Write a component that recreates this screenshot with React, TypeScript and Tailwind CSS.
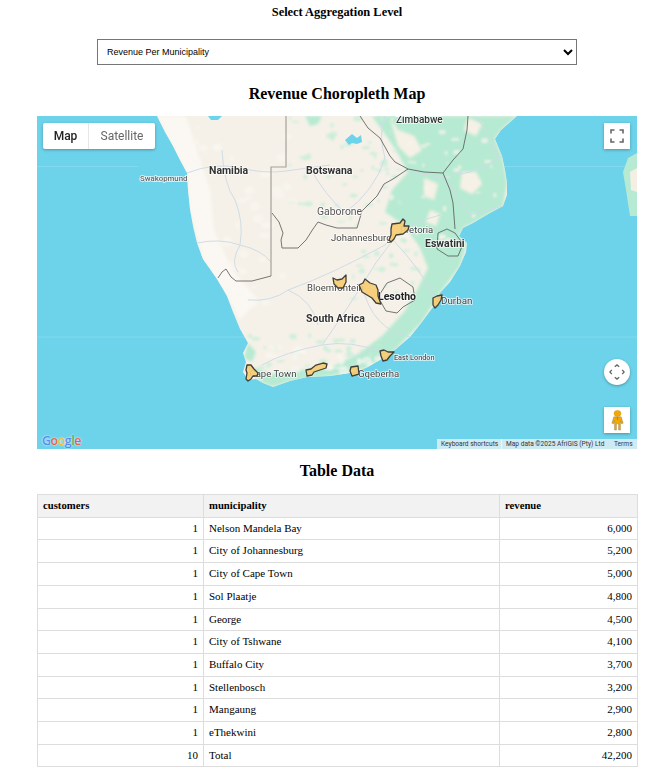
import React from "react";

const ROWS = [
  ["1", "Nelson Mandela Bay", "6,000"],
  ["1", "City of Johannesburg", "5,200"],
  ["1", "City of Cape Town", "5,000"],
  ["1", "Sol Plaatje", "4,800"],
  ["1", "George", "4,500"],
  ["1", "City of Tshwane", "4,100"],
  ["1", "Buffalo City", "3,700"],
  ["1", "Stellenbosch", "3,200"],
  ["1", "Mangaung", "2,900"],
  ["1", "eThekwini", "2,800"],
  ["10", "Total", "42,200"],
];

const LAND =
  "157,116 165,132 173,146 180,160 187,173 188,190 190,209 193,226 197,243 203,259 217,279 227,296 233,312 240,329 248,343 243,353 246,362 243,372 248,380 256,379 263,383 273,387 290,381 307,377 330,376 350,373 366,368 380,360 396,349 410,337 422,322 433,307 440,293 450,282 460,266 466,252 467,243 459,236 463,228 473,223 490,213 503,206 507,195 507,183 505,170 502,156 495,139 501,130 517,116";

const GREEN = [
  "372,116 517,116 501,130 495,139 502,156 507,183 503,206 473,223 463,228 459,236 467,243 460,266 440,293 422,322 396,349 366,368 330,376 290,381 273,387 263,383 252,374 256,368 272,374 300,370 330,368 358,354 382,336 404,312 418,288 428,268 420,248 405,226 385,212 392,190 408,172 396,150 382,130",
  "305,116 322,116 318,124 310,126",
  "248,343 256,352 252,362 244,358",
];

const CREAM = [
  "390,118 398,130 414,136 422,150 410,158 398,146",
  "462,172 476,172 482,184 472,194 460,188",
  "424,178 438,184 434,200 424,196",
  "468,118 482,124 476,136 464,130",
  "430,210 440,214 436,226 426,222",
];

const ROADS = [
  "M187 173 Q215 162 240 168 T286 171 T330 165",
  "M222 150 Q224 185 235 200 Q244 222 240 245 Q230 262 238 272",
  "M197 243 Q220 238 240 245 Q262 250 271 262",
  "M310 168 Q325 195 345 213 Q375 190 385 158 Q378 135 385 116",
  "M288 290 Q330 275 385 245 Q400 225 440 215",
  "M393 240 Q375 262 362 285 Q340 320 322 345 Q285 352 262 365",
  "M362 285 Q372 330 410 337",
  "M393 240 Q420 268 435 298",
  "M322 345 Q352 340 380 352",
  "M248 300 Q272 302 288 290 Q312 300 318 325",
  "M408 169 Q435 182 470 172 Q490 165 502 156",
  "M445 180 Q452 190 470 215 Q480 212 503 206",
  "M475 117 Q490 130 498 160",
];

const SHAPES = [
  "392,224 400,223 403,219 405,221 404,226 409,226 408,230 403,234 396,235 394,239 391,242 389,240 391,235 391,229",
  "333,278 337,280 342,279 346,275 346,282 343,288 338,288 334,284",
  "359,285 363,283 365,279 370,283 376,285 378,290 378,296 381,304 376,303 372,298 367,295 362,292",
  "433,298 437,296 442,295 441,300 438,305 435,308 433,305",
  "380,351 384,350 388,352 394,352 390,356 387,360 383,361 381,356",
  "351,367 358,366 359,374 352,376 350,371",
  "306,370 311,369 316,365 323,363 327,364 326,368 320,370 314,372 312,375 307,376",
  "247,365 251,365 254,369 258,373 257,376 253,376 251,379 248,381 246,379 247,373 246,370",
];

const LABELS: { text: string; x: number; y: number; size: number; weight?: number; fill?: string }[] = [
  { text: "Zimbabwe", x: 396, y: 123, size: 10, weight: 500, fill: "#333" },
  { text: "Namibia", x: 209, y: 174, size: 10.5, weight: 700, fill: "#333" },
  { text: "Botswana", x: 306, y: 174, size: 10.5, weight: 700, fill: "#333" },
  { text: "Swakopmund", x: 140, y: 181, size: 7.8, weight: 500, fill: "#666" },
  { text: "Gaborone", x: 317, y: 215, size: 10.4, fill: "#555" },
  { text: "Johannesburg", x: 331, y: 241, size: 9.5, fill: "#444" },
  { text: "Pretoria", x: 400, y: 233, size: 9.5, fill: "#444" },
  { text: "Eswatini", x: 425, y: 247, size: 10.5, weight: 700, fill: "#333" },
  { text: "Bloemfontein", x: 307, y: 291, size: 9.5, fill: "#444" },
  { text: "Lesotho", x: 378, y: 300, size: 10.5, weight: 700, fill: "#222" },
  { text: "South Africa", x: 306, y: 322, size: 10.5, weight: 700, fill: "#333" },
  { text: "Durban", x: 441, y: 304, size: 9.8, fill: "#444" },
  { text: "East London", x: 394, y: 360, size: 7.3, weight: 500, fill: "#555" },
  { text: "Cape Town", x: 249.5, y: 377, size: 9.5, fill: "#444" },
  { text: "Gqeberha", x: 358, y: 377, size: 9.6, fill: "#444" },
];

// fixed pseudo-random patches so the terrain looks mottled like map tiles
function patches(count: number, seed: number, x0: number, y0: number, w: number, h: number) {
  const out: { x: number; y: number; rx: number; ry: number }[] = [];
  let s = seed;
  const next = () => {
    s = (s * 16807) % 2147483647;
    return s / 2147483647;
  };
  for (let i = 0; i < count; i++) {
    out.push({ x: x0 + next() * w, y: y0 + next() * h, rx: 1 + next() * 3.5, ry: 0.8 + next() * 2.2 });
  }
  return out;
}

const GREEN_FLECKS = [
  ...patches(55, 11, 290, 116, 110, 110),
  ...patches(45, 23, 250, 335, 160, 40),
  ...patches(25, 31, 350, 235, 70, 65),
];
const CREAM_FLECKS = patches(45, 47, 385, 116, 115, 130);
const PALE_FLECKS = [...patches(40, 59, 195, 120, 100, 190), ...patches(20, 71, 270, 345, 110, 30)];

function MapArt() {
  return (
    <svg viewBox="37 116 600 333" className="absolute inset-0 h-full w-full">
      <defs>
        <filter id="soft" x="-5%" y="-5%" width="110%" height="110%">
          <feGaussianBlur stdDeviation="0.5" />
        </filter>
        <filter id="fleck" x="-5%" y="-5%" width="110%" height="110%">
          <feGaussianBlur stdDeviation="0.8" />
        </filter>
        <filter id="softer" x="-5%" y="-5%" width="110%" height="110%">
          <feGaussianBlur stdDeviation="1.4" />
        </filter>
        <clipPath id="land">
          <polygon points={LAND} />
        </clipPath>
      </defs>
      <rect x="37" y="116" width="600" height="333" fill="#6dd3ea" />
      <path d="M37 166.5H138M503 166.5H625M37 337H637" stroke="#8adcee" strokeWidth="0.7" />
      <g filter="url(#soft)">
        <polygon points={LAND} fill="#f5f1e8" />
      </g>
      <g clipPath="url(#land)">
        <g filter="url(#softer)">
          <polygon points="157,116 173,146 187,173 190,209 203,259 227,296 240,320 258,300 232,270 214,230 210,190 200,160 186,116" fill="#fbf8f3" />
          {GREEN.map((p) => (
            <polygon key={p} points={p} fill="#b7ead2" />
          ))}
          {CREAM.map((p) => (
            <polygon key={p} points={p} fill="#f6f1e6" />
          ))}
        </g>
        <g filter="url(#fleck)">
          {GREEN_FLECKS.map((f, i) => (
            <ellipse key={i} cx={f.x} cy={f.y} rx={f.rx} ry={f.ry} fill="#c6edd8" opacity="0.75" />
          ))}
          {CREAM_FLECKS.map((f, i) => (
            <ellipse key={i} cx={f.x} cy={f.y} rx={f.rx} ry={f.ry} fill="#f8f4ec" opacity="0.7" />
          ))}
          {PALE_FLECKS.map((f, i) => (
            <ellipse key={i} cx={f.x} cy={f.y} rx={f.rx * 1.6} ry={f.ry * 1.6} fill="#faf7f1" opacity="0.6" />
          ))}
        </g>
      </g>
      <g filter="url(#soft)">
        <polygon points="637,153 628,158 623,172 626,190 630,216 637,216" fill="#b7ead2" />
        <polygon points="637,168 630,172 631,190 637,192" fill="#f4efe4" />
        <path d="M345 140l7-6 5 4 4-3 1 7-5 2-5-1-3 2z" fill="#6dd3ea" />
        <path d="M208 116l14 0-4 4-7 0z" fill="#6dd3ea" />
        {ROADS.map((d) => (
          <path key={d} d={d} fill="none" stroke="#cfdbe6" strokeWidth="1" />
        ))}
      </g>
      <path d="M286 116V167H271V276" fill="none" stroke="#a5a29c" strokeWidth="1.2" />
      <g fill="none" stroke="#555" strokeWidth="0.8">
        <path d="M271 276L252 281 236 281 231 277 226 269 222 272 218 278" />
        <path d="M272 213L279 222 283 233 281 240 282 248 298 248 306 240 313 229 318 222 326 225 337 228 357 228 362 211 377 196 384 184 393 179 408 169 395 162 390 156 380 138 368 128 360 116" />
        <path d="M408 169L424 172 443 173 453 160 463 149 467 130 468 116" />
        <path d="M443 173L450 190 453 203 455 229" />
        <path d="M437 249L438 233 447 229 455 233 463 244 458 256 448 256Z" />
        <path d="M378 297L387 283 400 278 413 287 415 300 403 307 397 313 386 311Z" />
      </g>
      <g fontFamily="Roboto, sans-serif">
        {LABELS.map((l) => (
          <text
            key={l.text}
            x={l.x}
            y={l.y}
            fontSize={l.size}
            fontWeight={l.weight ?? 400}
            fill={l.fill}
            stroke="#ffffff"
            strokeOpacity="0.8"
            strokeWidth="1.6"
            paintOrder="stroke"
          >
            {l.text}
          </text>
        ))}
      </g>
      {/* the revenue polygons sit on top of the place names, slightly see-through */}
      <g fill="#f6cc74" fillOpacity="0.93" stroke="#3f3f3a" strokeWidth="1.3" strokeLinejoin="round">
        {SHAPES.map((p) => (
          <polygon key={p} points={p} />
        ))}
      </g>
    </svg>
  );
}

function MapControls() {
  return (
    <>
      <div className="absolute left-[6px] top-[7px] flex h-[26px] rounded-[2px] bg-white font-['Roboto',sans-serif] text-[12px] leading-[26px] shadow-[0_1px_3px_rgba(0,0,0,0.3)]">
        <div className="w-[46px] border-r border-[#e6e6e6] text-center font-medium text-[#222]">Map</div>
        <div className="w-[66px] text-center text-[#666]">Satellite</div>
      </div>

      <button className="absolute right-[7px] top-[7px] flex h-[26px] w-[26px] items-center justify-center bg-white shadow-[0_1px_3px_rgba(0,0,0,0.3)]">
        <svg viewBox="0 0 14 14" className="h-[14px] w-[14px]" fill="none" stroke="#666" strokeWidth="1.6">
          <path d="M1 4.5V1H4.5M9.5 1H13V4.5M13 9.5V13H9.5M4.5 13H1V9.5" />
        </svg>
      </button>

      <button className="absolute right-[7px] top-[243px] flex h-[26px] w-[26px] items-center justify-center rounded-full bg-white shadow-[0_1px_3px_rgba(0,0,0,0.3)]">
        <svg viewBox="0 0 16 16" className="h-[16px] w-[16px]" fill="none" stroke="#666" strokeWidth="1.3">
          <path d="M5.8 2.8L8 .9l2.2 1.9M5.8 13.2L8 15.1l2.2-1.9M2.8 5.8L.9 8l1.9 2.2M13.2 5.8L15.1 8l-1.9 2.2" />
        </svg>
      </button>

      <button className="absolute right-[7px] top-[291px] flex h-[26px] w-[26px] items-center justify-center bg-white shadow-[0_1px_3px_rgba(0,0,0,0.3)]">
        <svg viewBox="0 0 12 22" className="h-[21px] w-[13px]" preserveAspectRatio="none">
          <circle cx="6" cy="3.6" r="3.2" fill="#f5a800" stroke="#c98a00" strokeWidth="0.4" />
          <path d="M2.6 7.2h6.8l1.8 6.6-1.6.5-.9-3V21H7v-6.5H5V21H3.3V11.3l-.9 3-1.6-.5z" fill="#f5a800" stroke="#8a7a50" strokeWidth="0.4" />
          <path d="M6 7.4v3" stroke="#e0662a" strokeWidth="0.9" />
        </svg>
      </button>

      <div className="absolute bottom-[2px] left-[5px] font-['Open_Sans',sans-serif] text-[12.5px] font-semibold leading-[13px] tracking-[-0.5px] [text-shadow:0_0_2px_white]">
        <span className="text-[#5a8cf0]">G</span>
        <span className="text-[#e8604c]">o</span>
        <span className="text-[#f5bd2c]">o</span>
        <span className="text-[#5a8cf0]">g</span>
        <span className="text-[#4cb060]">l</span>
        <span className="text-[#e8604c]">e</span>
      </div>

      <div className="absolute bottom-0 right-0 flex h-[10px] items-center bg-[#cfeaf3] font-['Roboto',sans-serif] text-[6.6px] leading-[10px] text-[#333]">
        <span className="w-[64px] pl-[4px]">Keyboard shortcuts</span>
        <span className="h-full w-px bg-[#eef8fb]" />
        <span className="w-[108px] pl-[4px]">Map data ©2025 AfriGIS (Pty) Ltd</span>
        <span className="w-[27px] pl-[4px]">Terms</span>
      </div>
    </>
  );
}

export default function App() {
  return (
    <div className="h-[767px] overflow-hidden bg-white font-['Liberation_Serif',serif] text-black">
      <div className="mx-[37px] w-[600px]">
        <div className="pt-[4px] text-center text-[12.4px] font-bold leading-[16px]">Select Aggregation Level</div>

        <div className="mt-[19px] flex justify-center">
          <select className="h-[26px] w-[480px] border border-[#767676] bg-white px-[5px] font-['Liberation_Sans',sans-serif] text-[9px] text-black">
            <option>Revenue Per Municipality</option>
          </select>
        </div>

        <h2 className="mt-[19px] text-center text-[16px] font-bold leading-[20px]">Revenue Choropleth Map</h2>

        <div className="relative mt-[12px] h-[333px] w-[600px] overflow-hidden">
          <MapArt />
          <MapControls />
        </div>

        <h2 className="mt-[12px] text-center text-[16px] font-bold leading-[20px]">Table Data</h2>

        <table className="mt-[13px] w-[600px] table-fixed border-collapse text-[11px] leading-[13.7px]">
          <colgroup>
            <col className="w-[166px]" />
            <col className="w-[296px]" />
            <col className="w-[138px]" />
          </colgroup>
          <thead>
            <tr className="bg-[#f2f2f2] text-left text-[10.7px]">
              <th className="border border-[#ddd] px-[5px] py-[4px]">customers</th>
              <th className="border border-[#ddd] px-[5px] py-[4px]">municipality</th>
              <th className="border border-[#ddd] px-[5px] py-[4px]">revenue</th>
            </tr>
          </thead>
          <tbody>
            {ROWS.map((row) => (
              <tr key={row[1]}>
                <td className="border border-[#ddd] px-[5px] py-[4px] text-right">{row[0]}</td>
                <td className="border border-[#ddd] px-[5px] py-[4px]">{row[1]}</td>
                <td className="border border-[#ddd] px-[5px] py-[4px] text-right">{row[2]}</td>
              </tr>
            ))}
          </tbody>
        </table>
      </div>
    </div>
  );
}
